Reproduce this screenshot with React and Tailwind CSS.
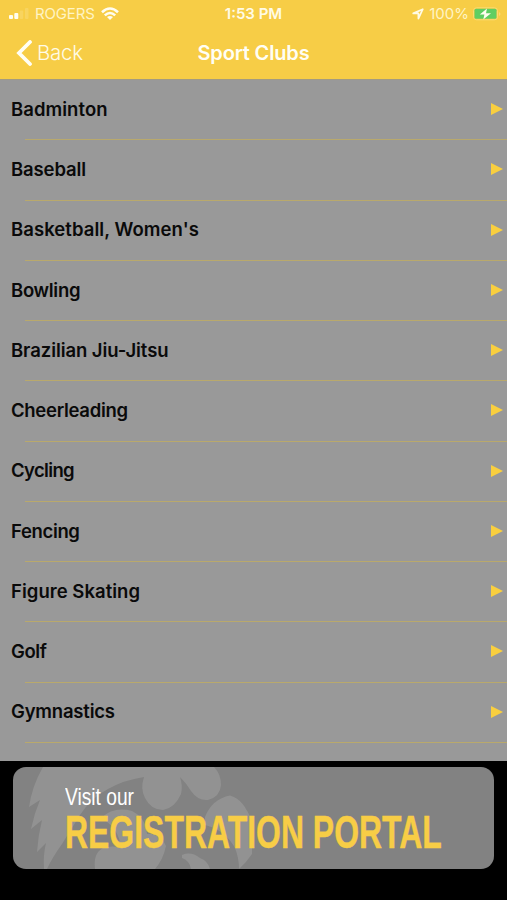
const rows = [
  ['Badminton', 'tracking-[0.05px]'],
  ['Baseball', 'tracking-[-0.12px]'],
  ["Basketball, Women's", 'tracking-[0.06px]'],
  ['Bowling', 'tracking-[-0.3px]'],
  ['Brazilian Jiu-Jitsu', 'tracking-[-0.08px]'],
  ['Cheerleading', 'tracking-[-0.3px]'],
  ['Cycling', 'tracking-[-0.65px]'],
  ['Fencing', 'tracking-[-0.35px]'],
  ['Figure Skating', 'tracking-[0.03px]'],
  ['Golf', 'tracking-[-0.4px]'],
  ['Gymnastics', 'tracking-[-0.2px]'],
];

function StatusBar() {
  return (
    <div className="grid h-[27px] grid-cols-3 items-center text-[15px] leading-none text-[#fff4c4]">
      <div className="flex items-center pl-[9px]">
        <svg width="20" height="12" viewBox="0 0 20 12" fill="#fffdf0">
          <rect x="0" y="7" width="4" height="4" rx="1" />
          <rect x="5.3" y="5" width="4" height="6" rx="1" />
          <rect x="10.7" y="2.5" width="3.5" height="8.5" rx="1" opacity=".15" />
          <rect x="16" y="0" width="3.5" height="11" rx="1" opacity=".15" />
        </svg>
        <span className="ml-[6px] tracking-[-0.15px]">ROGERS</span>
        <svg className="ml-[6px]" width="18" height="14" viewBox="0 0 18 14" fill="none" stroke="#fffdf0" strokeWidth="2.6">
          <path d="M1 5.2Q9-2.2 17 5.2" />
          <path d="M3.8 8.4Q9 3.6 14.2 8.4" />
          <path d="M9 13L6 10Q9 7.8 12 10Z" fill="#fffdf0" stroke="none" />
        </svg>
      </div>
      <div className="text-center font-semibold text-[#fffbe6]">1:53 PM</div>
      <div className="flex items-center justify-end pr-[6px]">
        <svg width="12" height="12" viewBox="0 0 12 12" fill="none" stroke="#fffbe6" strokeWidth="1.7" strokeLinejoin="round">
          <path d="M10.8 1.2L1.2 5.4H6.4V10.6Z" />
        </svg>
        <span className="ml-[5px]">100%</span>
        <svg className="ml-[4px]" width="28" height="14" viewBox="0 0 28 14">
          <rect x=".5" y=".8" width="24" height="12" rx="3" fill="none" stroke="#fada74" />
          <rect x="1.5" y="1.8" width="22" height="10" rx="1.5" fill="#5fce62" />
          <path d="M14 1.5L6.8 7.6H11.4L10.3 12.5L18 6.2H13Z" fill="#fffdf0" />
          <path d="M26 5V9Q27.5 8 27.5 7T26 5Z" fill="#fada74" />
        </svg>
      </div>
    </div>
  );
}

function Banner() {
  return (
    <div className="relative mx-[13px] h-[102px] overflow-hidden rounded-[13px] bg-[#828282]">
      <svg className="absolute inset-0" width="260" height="102" viewBox="13 767 260 102" fill="#929292">
        <path d="M43 767Q32 786 29 807L40 800Q34 814 31 829L42 820Q38 836 37 852L46 843Q43 855 44 869H47Q52 858 62 844L80 815Q92 797 108 789Q124 780 144 777Q140 789 145 798Q151 810 163 810Q175 808 181 794Q183 786 180 777Q187 784 191 791Q198 801 208 800Q220 797 221 785Q221 774 214 767Z" />
        <path d="M205 817Q212 799 230 795.500Q244 799 252 822V854Q246 863 239 869Q239 858 235 848Q225 830 205 825Z" />
        <path d="M95 869Q93 853 103 848Q113 845 121 848Q119 828 101 818Q114 806 132 811Q146 818 147 834Q160 832 166 846Q163 860 155 869Z" />
        <path d="M182 855Q191 851 200 858Q208 861 210 869H191Q190 861 182 858Z" />
      </svg>
      <div className="relative pl-[52px] pt-[18px] font-['Liberation_Sans']">
        <div className="w-max origin-left scale-x-[0.8] text-[24px] leading-[24px] text-white">Visit our</div>
        <div className="mt-px w-max origin-left scale-x-[0.702] text-[45.500px] font-bold leading-[45px] text-[#f7cd46] [-webkit-text-stroke:0.4px_#f7cd46]">REGISTRATION PORTAL</div>
      </div>
    </div>
  );
}

export default function App() {
  return (
    <div className="flex h-[900px] w-[507px] flex-col overflow-hidden bg-black font-['Inter',sans-serif]">
      <header className="h-[79px] shrink-0 bg-[#f7cd46]">
        <StatusBar />
        <div className="grid h-[51px] grid-cols-[1fr_auto_1fr] items-center">
          <div className="flex items-center pl-[16px] text-[20.5px] font-light tracking-[-0.3px] text-[#fffbe6]">
            <svg width="17" height="26" viewBox="0 0 17 26" fill="none" stroke="#fffef5" strokeWidth="3.8" strokeLinecap="round">
              <path d="M14 2L3 13L14 24" />
            </svg>
            <span className="ml-[4px] pt-px">Back</span>
          </div>
          <h1 className="text-[20px] font-semibold tracking-[-0.15px] text-[#fffef5]">Sport Clubs</h1>
        </div>
      </header>
      <main className="h-[682px] shrink-0 border-t border-[#a39b80] bg-[#999999]">
        {rows.map(([name, tracking]) => (
          <div key={name} className="flex h-[60.25px] flex-col">
            <div className="flex flex-1 items-center justify-between pb-px pl-[11px] pr-[4px]">
              <span className={`text-[18.5px] font-semibold leading-none text-[#0a0a0a] ${tracking}`}>{name}</span>
              <svg width="12" height="12" viewBox="0 0 12 12" fill="#f9cf3f">
                <path d="M0 0L12 6L0 12Z" />
              </svg>
            </div>
            <div className="ml-[25px] border-b border-[#b9a96c]" />
          </div>
        ))}
      </main>
      <footer className="flex-1 bg-black pt-[6px]">
        <Banner />
      </footer>
    </div>
  );
}
